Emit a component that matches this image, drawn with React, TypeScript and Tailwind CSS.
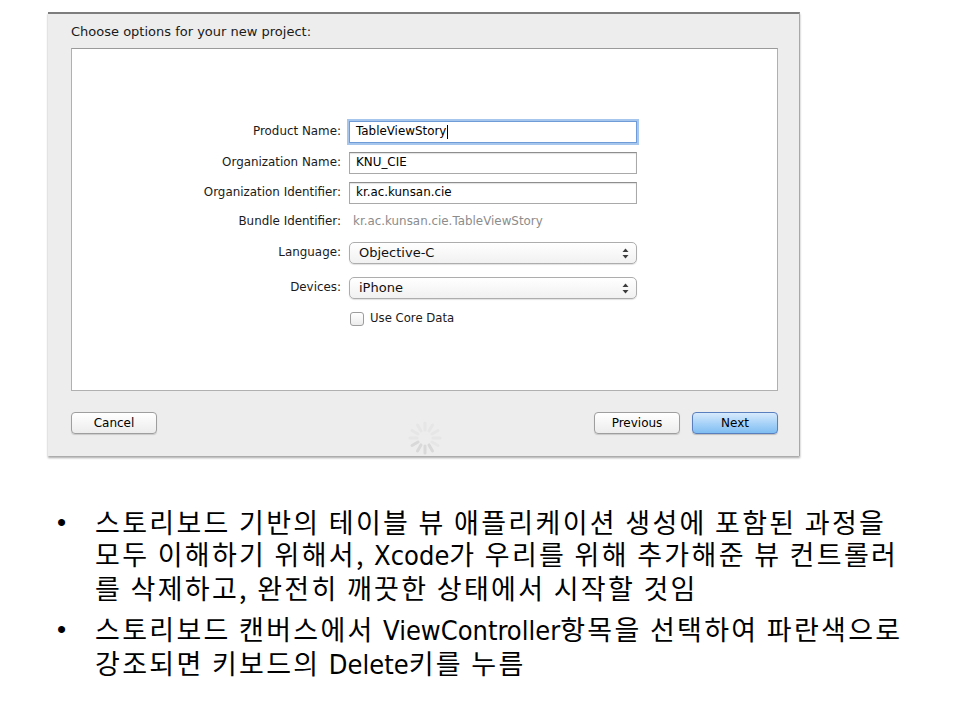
import React from 'react';

const mac = { fontFamily: '"DejaVu Sans", "Liberation Sans", sans-serif' };
const kr = { fontFamily: '"Noto Sans CJK KR", "Noto Sans", sans-serif' };
const latin = { fontFamily: '"Liberation Sans Narrow", "DejaVu Sans Condensed", "Liberation Sans", sans-serif' };

function Label({ children }: { children: React.ReactNode }) {
    return (
        <div className="w-[269px] shrink-0 text-right text-[11.9px] text-[#1a1a1a]">{children}</div>
    );
}

function TextField({ value, focused }: { value: string; focused?: boolean }) {
    return (
        <div
            className={
                focused
                    ? 'flex h-[22px] w-[288px] items-center border border-[#6f9bd6] bg-white pl-[6px] text-[11.9px] text-black shadow-[0_0_0_2px_#a6c6ee]'
                    : 'flex h-[22px] w-[288px] items-center border border-[#a9a9a9] border-t-[#8e8e8e] bg-white pl-[6px] text-[11.9px] text-black shadow-[inset_0_1px_1px_rgba(0,0,0,0.12)]'
            }
        >
            <span>{value}</span>
            {focused && <span className="ml-[1px] inline-block h-[14px] w-[1px] bg-black" />}
        </div>
    );
}

function PopUp({ value }: { value: string }) {
    return (
        <div className="flex h-[22px] w-[288px] items-center justify-between rounded-[5px] border border-[#adadad] bg-gradient-to-b from-white to-[#f1f1f1] pl-[9px] pr-[7px] text-[13px] text-[#111] shadow-[0_1px_1px_rgba(0,0,0,0.12)]">
            <span>{value}</span>
            <svg width="7" height="11" viewBox="0 0 7 11">
                <path d="M3.5 0.5 L6.5 4 L0.5 4 Z" fill="#3c3c3c" />
                <path d="M3.5 10.5 L6.5 7 L0.5 7 Z" fill="#3c3c3c" />
            </svg>
        </div>
    );
}

function MacButton({ label, primary }: { label: string; primary?: boolean }) {
    return (
        <div
            className={
                primary
                    ? 'flex h-[22px] w-[86px] items-center justify-center rounded-[4px] border border-[#5a7fbf] bg-gradient-to-b from-[#d7ebfc] via-[#a9d3f8] to-[#7fbdf2] text-[12px] text-black shadow-[0_1px_1px_rgba(0,0,0,0.2)]'
                    : 'flex h-[22px] w-[86px] items-center justify-center rounded-[4px] border border-[#9e9e9e] bg-gradient-to-b from-white to-[#ececec] text-[12px] text-black shadow-[0_1px_1px_rgba(0,0,0,0.15)]'
            }
        >
            {label}
        </div>
    );
}

function Spinner() {
    const spokes = Array.from({ length: 12 }, (_, i) => i);
    return (
        <svg width="34" height="34" viewBox="-17 -17 34 34" className="absolute left-[360px] top-[407px]">
            {spokes.map((i) => {
                const a = (i * 30 * Math.PI) / 180;
                const shade = i >= 10 || i <= 1 ? '#d9d9d9' : '#e6e6e6';
                return (
                    <line
                        key={i}
                        x1={Math.sin(a) * 8}
                        y1={Math.cos(a) * 8}
                        x2={Math.sin(a) * 15}
                        y2={Math.cos(a) * 15}
                        stroke={shade}
                        strokeWidth="3"
                        strokeLinecap="round"
                    />
                );
            })}
        </svg>
    );
}

// latin words inside the korean text use a narrower face, like Malgun Gothic's
function L({ children }: { children: React.ReactNode }) {
    return <span className="tracking-normal" style={latin}>{children}</span>;
}

function Bullet({ children }: { children: React.ReactNode }) {
    return (
        <div className="flex">
            <span className="w-[95px] shrink-0 pl-[57px] text-[26px]" style={{ fontFamily: '"Liberation Sans", sans-serif' }}>•</span>
            <div className="flex flex-col tracking-[2.3px]">{children}</div>
        </div>
    );
}

export default function App() {
    return (
        <div className="min-h-screen w-[960px] bg-white">
            {/* screenshot of the Xcode new project sheet */}
            <div className="pl-[48px] pt-[12px]" style={mac}>
                <div className="relative flex h-[444px] w-[752px] flex-col border-r border-t-2 border-r-[#a8a8a8] border-t-[#7d7d7d] bg-[#ededed] pl-[23px] pr-[21px] shadow-[0_2px_2px_rgba(0,0,0,0.35)]">
                    <div className="h-[34px] pt-[10px] text-[13px] leading-[16px] text-[#1a1a1a]">
                        Choose options for your new project:
                    </div>

                    <div className="flex h-[343px] flex-col border border-[#b0b0b0] border-t-[#9a9a9a] bg-white pt-[72px]">
                        <div className="flex items-center gap-x-[8px]">
                            <Label>Product Name:</Label>
                            <TextField value="TableViewStory" focused />
                        </div>
                        <div className="mt-[9px] flex items-center gap-x-[8px]">
                            <Label>Organization Name:</Label>
                            <TextField value="KNU_CIE" />
                        </div>
                        <div className="mt-[8px] flex items-center gap-x-[8px]">
                            <Label>Organization Identifier:</Label>
                            <TextField value="kr.ac.kunsan.cie" />
                        </div>
                        <div className="mt-[8px] flex h-[20px] items-center gap-x-[8px]">
                            <Label>Bundle Identifier:</Label>
                            <div className="pl-[4px] text-[11.9px] text-[#8c8c8c]">kr.ac.kunsan.cie.TableViewStory</div>
                        </div>
                        <div className="mt-[10px] flex items-center gap-x-[8px]">
                            <Label>Language:</Label>
                            <PopUp value="Objective-C" />
                        </div>
                        <div className="mt-[13px] flex items-center gap-x-[8px]">
                            <Label>Devices:</Label>
                            <PopUp value="iPhone" />
                        </div>
                        <div className="mt-[12px] flex h-[16px] items-center pl-[278px]">
                            <div className="h-[14px] w-[14px] rounded-[3px] border border-[#9d9d9d] bg-gradient-to-b from-white to-[#ececec]" />
                            <span className="ml-[6px] text-[11.7px] text-[#1a1a1a]">Use Core Data</span>
                        </div>
                    </div>

                    <div className="mt-[21px] flex items-center justify-between">
                        <MacButton label="Cancel" />
                        <div className="flex gap-x-[12px]">
                            <MacButton label="Previous" />
                            <MacButton label="Next" primary />
                        </div>
                    </div>

                    <Spinner />
                </div>
            </div>

            {/* bullet notes */}
            <div className="mt-[50px] flex flex-col gap-y-[9px] text-[27px] leading-[32px] text-black" style={kr}>
                <Bullet>
                    <div>스토리보드 기반의 테이블 뷰 애플리케이션 생성에 포함된 과정을</div>
                    <div>모두 이해하기 위해서, <L>Xcode</L>가 우리를 위해 추가해준 뷰 컨트롤러</div>
                    <div>를 삭제하고, 완전히 깨끗한 상태에서 시작할 것임</div>
                </Bullet>
                <Bullet>
                    <div>스토리보드 캔버스에서 <L>ViewController</L>항목을 선택하여 파란색으로</div>
                    <div>강조되면 키보드의 <L>Delete</L>키를 누름</div>
                </Bullet>
            </div>
        </div>
    );
}
